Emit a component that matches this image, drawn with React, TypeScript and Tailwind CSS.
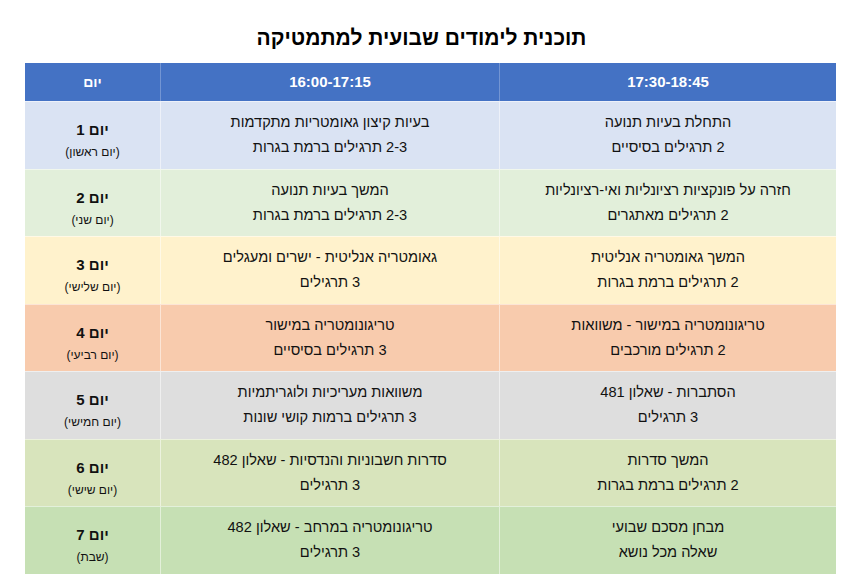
const rows = [
  {
    day: "יום 1",
    sub: "(יום ראשון)",
    bg: "bg-[#dae3f3]",
    early: ["בעיות קיצון גאומטריות מתקדמות", "2-3 תרגילים ברמת בגרות"],
    late: ["התחלת בעיות תנועה", "2 תרגילים בסיסיים"],
  },
  {
    day: "יום 2",
    sub: "(יום שני)",
    bg: "bg-[#e2efda]",
    early: ["המשך בעיות תנועה", "2-3 תרגילים ברמת בגרות"],
    late: ["חזרה על פונקציות רציונליות ואי-רציונליות", "2 תרגילים מאתגרים"],
  },
  {
    day: "יום 3",
    sub: "(יום שלישי)",
    bg: "bg-[#fff2cc]",
    early: ["גאומטריה אנליטית - ישרים ומעגלים", "3 תרגילים"],
    late: ["המשך גאומטריה אנליטית", "2 תרגילים ברמת בגרות"],
  },
  {
    day: "יום 4",
    sub: "(יום רביעי)",
    bg: "bg-[#f8cbad]",
    early: ["טריגונומטריה במישור", "3 תרגילים בסיסיים"],
    late: ["טריגונומטריה במישור - משוואות", "2 תרגילים מורכבים"],
  },
  {
    day: "יום 5",
    sub: "(יום חמישי)",
    bg: "bg-[#dedede]",
    early: ["משוואות מעריכיות ולוגריתמיות", "3 תרגילים ברמות קושי שונות"],
    late: ["הסתברות - שאלון 481", "3 תרגילים"],
  },
  {
    day: "יום 6",
    sub: "(יום שישי)",
    bg: "bg-[#d8e4bc]",
    early: ["סדרות חשבוניות והנדסיות - שאלון 482", "3 תרגילים"],
    late: ["המשך סדרות", "2 תרגילים ברמת בגרות"],
  },
  {
    day: "יום 7",
    sub: "(שבת)",
    bg: "bg-[#c6e0b4]",
    early: ["טריגונומטריה במרחב - שאלון 482", "3 תרגילים"],
    late: ["מבחן מסכם שבועי", "שאלה מכל נושא"],
  },
];

const Lesson = ({ lines }: { lines: string[] }) => (
  <div
    dir="rtl"
    className="flex flex-col items-center justify-center border-l border-white/50 text-[14.6px] leading-[25px] text-[#111]"
  >
    {lines.map((l) => (
      <span key={l}>{l}</span>
    ))}
  </div>
);

const App = () => {
  return (
    <div className="w-[861px] h-[584px] bg-white font-['Liberation_Sans',Arial,sans-serif] pt-[24px]">
      <h1
        dir="rtl"
        className="text-center text-[21px] leading-[28px] font-bold text-black mb-[11px] pr-[18px]"
      >
        תוכנית לימודים שבועית למתמטיקה
      </h1>

      <div className="mx-[25px] w-[811px]">
        <div className="grid grid-cols-[135px_339px_337px] h-[38px] bg-[#4472c4] text-white font-bold">
          <div className="flex items-center justify-center text-[14px]">יום</div>
          <div className="flex items-center justify-center text-[15px] border-l border-white/25">
            16:00-17:15
          </div>
          <div className="flex items-center justify-center text-[15px] border-l border-white/25">
            17:30-18:45
          </div>
        </div>

        {rows.map((r) => (
          <div
            key={r.day}
            className={`grid grid-cols-[135px_339px_337px] h-[67.5px] border-t border-white/50 ${r.bg}`}
          >
            <div dir="rtl" className="flex flex-col items-center justify-center pt-[12px] text-[#111]">
              <span className="text-[15px] leading-[22px] font-bold">{r.day}</span>
              <span className="text-[12px] leading-[22px]">{r.sub}</span>
            </div>
            <Lesson lines={r.early} />
            <Lesson lines={r.late} />
          </div>
        ))}
      </div>
    </div>
  );
};

export default App;
